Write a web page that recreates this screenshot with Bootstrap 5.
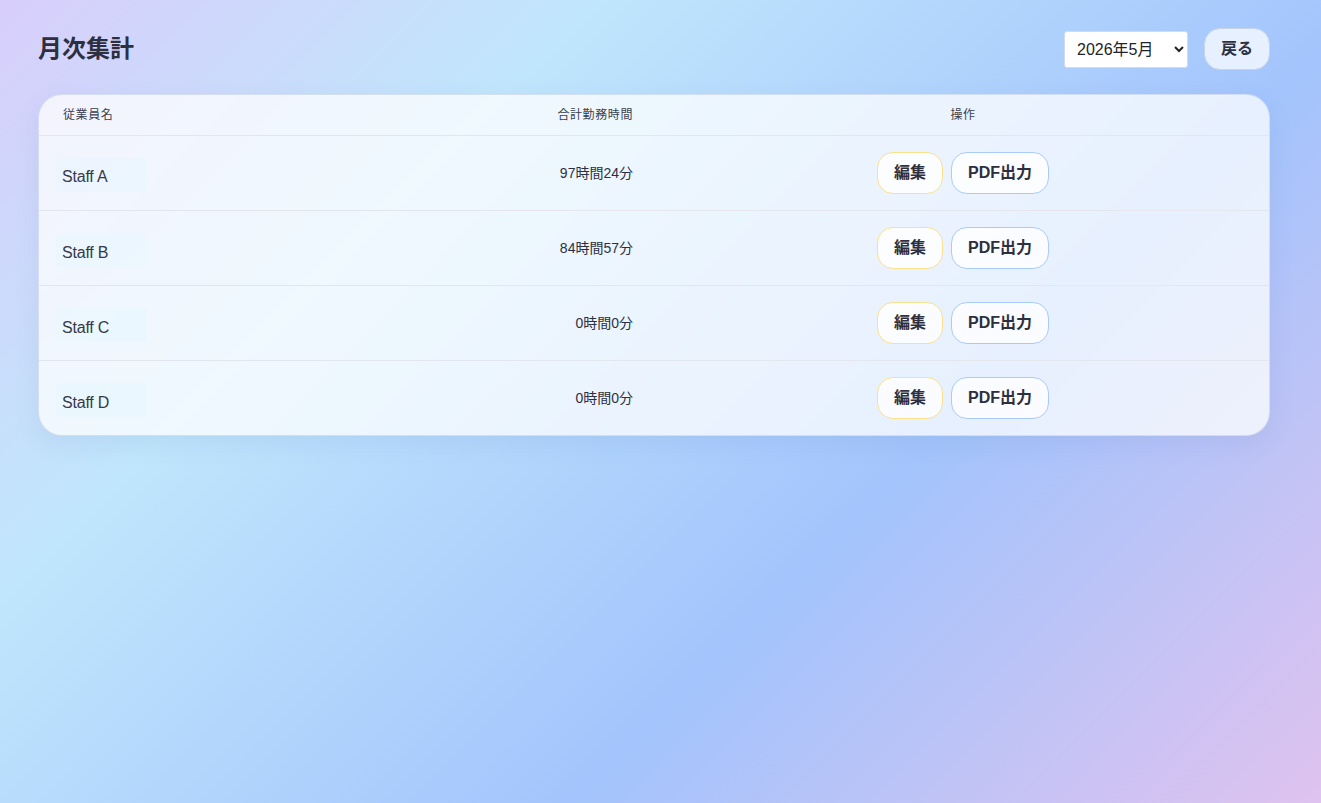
<!DOCTYPE html>
<html lang="ja">
<head>
<meta charset="utf-8">
<title>月次集計</title>
<link href="https://cdn.jsdelivr.net/npm/bootstrap@5.3.0/dist/css/bootstrap.min.css" rel="stylesheet">
<style>
html,body{height:100%}
body{font-family:"Liberation Sans","Noto Sans CJK JP",sans-serif;color:#2d2f3e;background:linear-gradient(135deg,#d8cefb 0%,#c0e6fc 28%,#a3c4fc 65%,#dfc2ef 100%) no-repeat;min-height:803px}
.page{padding:28px 51px 0 38px}
.top{height:42px;margin-bottom:24px}
h1.title{font-size:24px;font-weight:700;margin:0;color:#2d2f3e;line-height:42px}
.month{width:124px;height:37px;font-size:16px;color:#212529;background:#fff;border:1px solid #d5dbe6;border-radius:3px;padding:0 8px;font-family:inherit}
.btn-soft{--bs-btn-font-size:16px;--bs-btn-font-weight:700;--bs-btn-color:#2d2f3e;--bs-btn-hover-color:#2d2f3e;--bs-btn-padding-x:16px;--bs-btn-padding-y:0;--bs-btn-border-radius:16px;height:42px;line-height:40px}
.btn-back{--bs-btn-bg:#e6f0fe;--bs-btn-border-color:#c8d3e4;--bs-btn-hover-bg:#e6f0fe;--bs-btn-hover-border-color:#c8d3e4}
.btn-edit{--bs-btn-bg:rgba(255,255,255,.8);--bs-btn-border-color:#fbe08f;--bs-btn-hover-bg:#fff;--bs-btn-hover-border-color:#fbe08f}
.btn-pdf{--bs-btn-bg:rgba(255,255,255,.8);--bs-btn-border-color:#a9cbfb;--bs-btn-hover-bg:#fff;--bs-btn-hover-border-color:#a9cbfb}
.panel{border:1px solid rgba(205,216,234,.8);border-radius:24px;overflow:hidden;background:rgba(255,255,255,.74);box-shadow:0 8px 24px rgba(80,110,170,.1);width:1232px}
.sheet{--bs-table-bg:transparent;--bs-table-color:#2d2f3e;--bs-table-border-color:#e3e6ec;margin:0;table-layout:fixed}
.sheet th{font-size:12px;font-weight:400;letter-spacing:.6px;padding:0 24px;height:40px;vertical-align:middle;color:#3a3d4d}
.sheet td{font-size:14px;padding:2px 24px 0;height:75px;vertical-align:middle}
.sheet td.acts{padding-top:0}
.sheet tr:last-child td{border-bottom:0}
.name{display:block;width:91px;height:34px;margin:3px 0 0 -7px;padding:10px 6px 0 6px;font-size:16px;letter-spacing:-.2px;line-height:20px;color:#363949;background:rgba(225,245,255,.35);border-radius:4px}
tbody tr:first-child .name{padding-top:9px;margin-top:2px}
</style>
</head>
<body>
<main class="page">
  <header class="top d-flex align-items-center justify-content-between">
    <h1 class="title">月次集計</h1>
    <div class="d-flex align-items-center gap-3">
      <select class="month" aria-label="月"><option>2026年5月</option></select>
      <a class="btn btn-soft btn-back" href="#">戻る</a>
    </div>
  </header>
  <section class="panel">
    <table class="table sheet">
      <colgroup><col style="width:352px"><col style="width:266px"><col></colgroup>
      <thead>
        <tr><th>従業員名</th><th class="text-end">合計勤務時間</th><th class="text-center">操作</th></tr>
      </thead>
      <tbody>
        <tr><td><span class="name">Staff A</span></td><td class="text-end">97時間24分</td><td class="acts"><div class="d-flex justify-content-center gap-2"><a class="btn btn-soft btn-edit" href="#">編集</a><a class="btn btn-soft btn-pdf" href="#">PDF出力</a></div></td></tr>
        <tr><td><span class="name">Staff B</span></td><td class="text-end">84時間57分</td><td class="acts"><div class="d-flex justify-content-center gap-2"><a class="btn btn-soft btn-edit" href="#">編集</a><a class="btn btn-soft btn-pdf" href="#">PDF出力</a></div></td></tr>
        <tr><td><span class="name">Staff C</span></td><td class="text-end">0時間0分</td><td class="acts"><div class="d-flex justify-content-center gap-2"><a class="btn btn-soft btn-edit" href="#">編集</a><a class="btn btn-soft btn-pdf" href="#">PDF出力</a></div></td></tr>
        <tr><td><span class="name">Staff D</span></td><td class="text-end">0時間0分</td><td class="acts"><div class="d-flex justify-content-center gap-2"><a class="btn btn-soft btn-edit" href="#">編集</a><a class="btn btn-soft btn-pdf" href="#">PDF出力</a></div></td></tr>
      </tbody>
    </table>
  </section>
</main>
<script src="https://cdn.jsdelivr.net/npm/bootstrap@5.3.0/dist/js/bootstrap.bundle.min.js"></script>
</body>
</html>
